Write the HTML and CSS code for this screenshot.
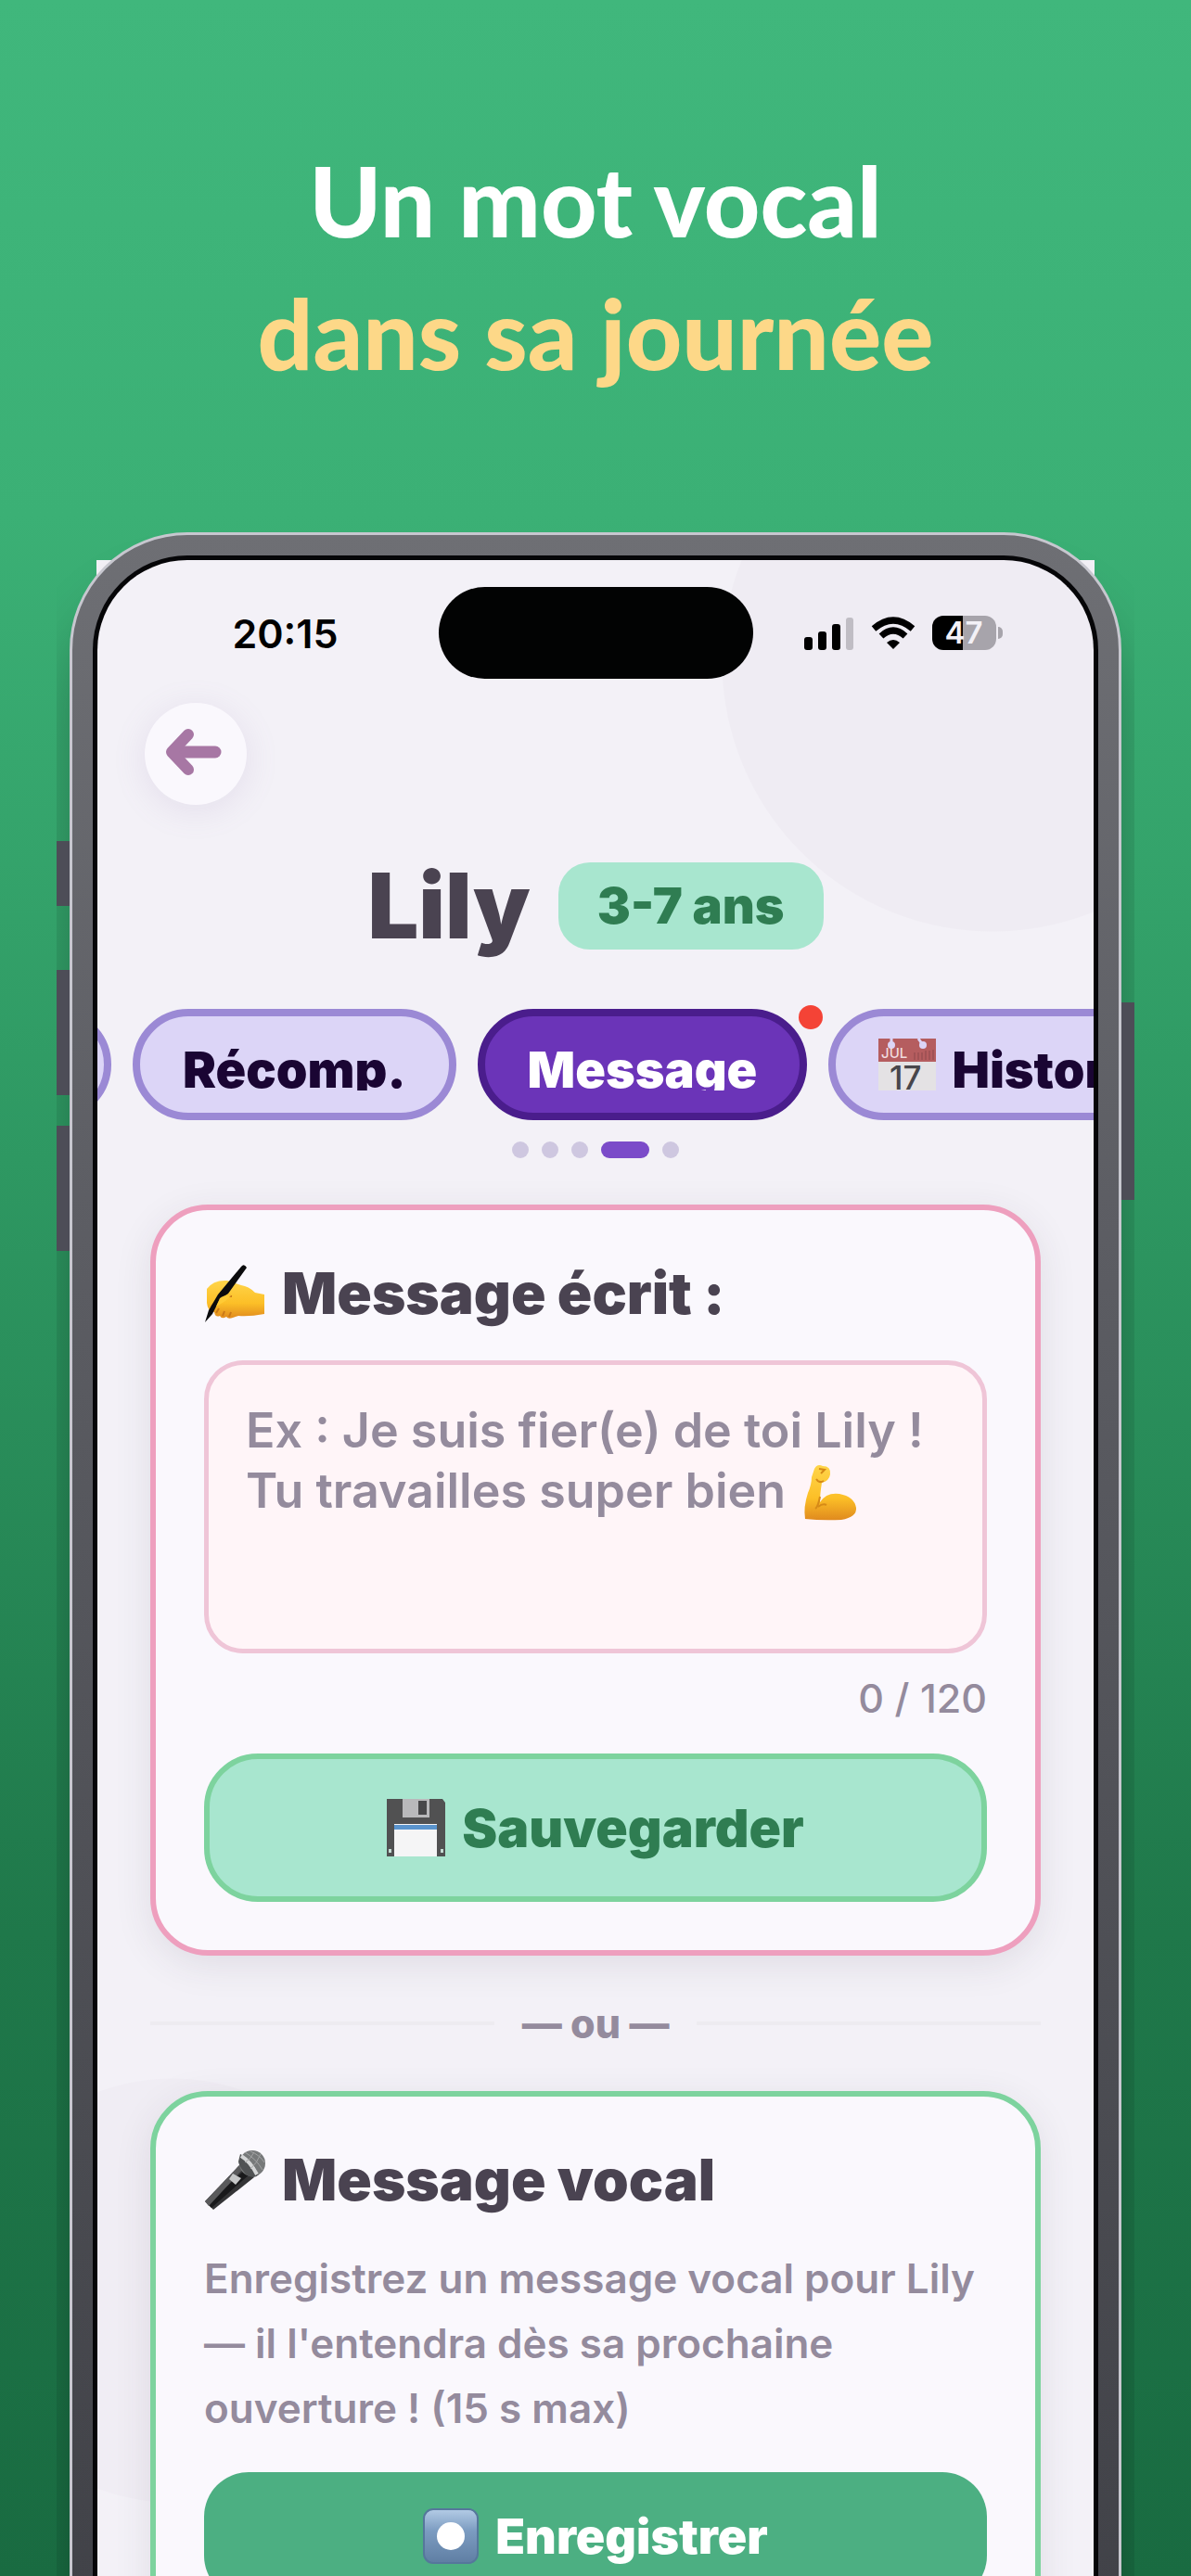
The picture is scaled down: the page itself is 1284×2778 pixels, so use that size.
FILE: index.html
```html
<!DOCTYPE html>
<html lang="fr">
<head>
  <meta charset="UTF-8">
  <title>Un mot vocal dans sa journée</title>
  <meta name="viewport" content="width=device-width, initial-scale=1.0">
  <link rel="stylesheet" href="styles.css">
</head>
<body>

  <!-- HEADLINE -->
  <header class="headline">
    <p>Un mot vocal</p>
    <p class="accent">dans sa journée</p>
  </header>

  <!-- PHONE -->
  <div class="phone">
    <span class="side-button mute"></span>
    <span class="side-button volume-up"></span>
    <span class="side-button volume-down"></span>
    <span class="side-button power"></span>

    <div class="frame">
      <main class="screen">

        <!-- Status bar -->
        <div class="status-bar">
          <span class="time">20:15</span>
          <span class="island"></span>
          <div class="status-icons">
            <svg width="54" height="36" viewBox="0 0 54 36">
              <rect x="0" y="22" width="9" height="14" rx="3"/>
              <rect x="15" y="16" width="9" height="20" rx="3"/>
              <rect x="30" y="8" width="9" height="28" rx="3"/>
              <rect x="45" y="1" width="8" height="35" rx="3" fill="#c0bdc4"/>
            </svg>
            <svg width="48" height="36" viewBox="0 0 48 36">
              <path d="M3 13 Q24 -5 45 13" fill="none" stroke="#000" stroke-width="7"/>
              <path d="M11 21 Q24 9 37 21" fill="none" stroke="#000" stroke-width="7"/>
              <path d="M17 28 Q24 22 31 28 L24 35 Z"/>
            </svg>
            <div class="battery">47</div>
          </div>
        </div>

        <button class="back-btn" aria-label="Retour">
          <svg width="62" height="52" viewBox="0 0 62 52">
            <path d="M54 26 H10" stroke="#a777a4" stroke-width="13" stroke-linecap="round"/>
            <path d="M25 7 L7 26 L25 45" fill="none" stroke="#a777a4" stroke-width="12" stroke-linecap="round" stroke-linejoin="round"/>
          </svg>
        </button>

        <div class="profile">
          <h1>Lily</h1>
          <span class="age">3-7 ans</span>
        </div>

        <!-- Tabs -->
        <nav class="tabs">
          <button class="tab tab-previous" aria-label="Onglet précédent"></button>
          <button class="tab"><span>Récomp.</span></button>
          <button class="tab active"><span>Message</span><i class="notif"></i></button>
          <button class="tab">
            <span>
              <svg class="emoji" width="62" height="56" viewBox="0 0 62 56">
                <rect y="2" width="62" height="54" fill="#e4e2e4"/>
                <path d="M0 0 H62 V25 H0 Z" fill="#b55d5f"/>
                <path d="M14 0 V6 M43 0 L48 7" stroke="#dcd5f7" stroke-width="3"/>
                <circle cx="14" cy="7" r="4" fill="#dcd5f7"/>
                <circle cx="48" cy="7" r="4" fill="#dcd5f7"/>
                <path d="M39 15 V23 M43 15 V23 M47 15 V23 M51 13 V23 M55 13 V23 M59 12 V23" stroke="#8d494d" stroke-width="1"/>
                <text x="3" y="21" font-size="15" font-weight="500" fill="#f0dcdf">JUL</text>
                <text x="12" y="55" font-size="35" font-weight="500" fill="#48464b">17</text>
              </svg>
              Historique
            </span>
          </button>
        </nav>

        <div class="dots">
          <span></span><span></span><span></span><span class="current"></span><span></span>
        </div>

        <!-- Written message -->
        <section class="card card-pink">
          <h2>
            <svg class="emoji" width="66" height="64" viewBox="0 0 66 64">
              <defs>
                <linearGradient id="skin" x1="0" y1="0" x2="0" y2="1">
                  <stop offset="0" stop-color="#ffd54a"/>
                  <stop offset=".6" stop-color="#fcbf27"/>
                  <stop offset="1" stop-color="#e08a1e"/>
                </linearGradient>
              </defs>
              <path d="M3 27 Q10 17 25 18 L40 23 Q48 24 55 31 L65 33 V54 Q49 57 37 56 L31 58 Q26 60 24 57 Q19 60 17 56 Q12 58 11 52 Q4 52 3 42 Z" fill="url(#skin)"/>
              <path d="M8 46 Q17 33 30 35 M13 53 L16 48 M20 56 L22 51 M27 57 L29 52" fill="none" stroke="#c97818" stroke-width="2"/>
              <path d="M40 3 Q43 -1 46 4 L26 32 L17 38 L9 54 L1 63 L5 50 L15 33 Z" fill="#0b0b0d"/>
              <path d="M17 37 Q24 32 29 34 L23 40 L13 46 Z" fill="#ffcb35"/>
            </svg>
            <label for="message">Message écrit :</label>
          </h2>
          <div class="message-box">
            <textarea id="message" maxlength="120" placeholder="Ex : Je suis fier(e) de toi Lily !&#10;Tu travailles super bien"></textarea>
            <svg class="muscle" width="58" height="62" viewBox="0 0 58 62">
              <path d="M12 6 Q15 0 21 3 Q30 3 29 12 Q28 19 20 21 Q18 33 18 42 Q25 31 39 33 Q55 36 57 48 Q58 58 41 61 Q20 62 2 60 Q0 47 5 32 Q9 23 9 15 Z" fill="url(#skin)"/>
              <path d="M14 17 Q17 22 22 19 M17 6 L23 7 L19 11 M18 36 Q16 47 13 49 M16 47 Q21 43 25 45" fill="none" stroke="#d68a17" stroke-width="2"/>
            </svg>
          </div>
          <p class="counter">0 / 120</p>
          <button class="btn btn-save">
            <svg class="emoji" width="63" height="62" viewBox="0 0 63 62">
              <path d="M3 0 H60 L63 4 V62 H0 V0 Z" fill="#515152"/>
              <path d="M17 0 H46 V20 H17 Z" fill="#b9b9bb"/>
              <rect x="34" y="2" width="9" height="15" fill="#48484a"/>
              <path d="M8 62 V27 H54 V62 Z" fill="#f5f5f6"/>
              <rect x="8" y="28" width="46" height="5" fill="#5a94cd"/>
              <rect x="2" y="54" width="3" height="4" fill="#c5dbd3"/>
              <rect x="58" y="54" width="3" height="4" fill="#c5dbd3"/>
            </svg>
            Sauvegarder
          </button>
        </section>

        <div class="divider"><span>— ou —</span></div>

        <!-- Voice message -->
        <section class="card card-green">
          <h2>
            <svg class="emoji" width="66" height="64" viewBox="0 0 66 64">
              <path d="M1 55 L39 15 L54 29 L10 64 Z" fill="#343436"/>
              <path d="M4 58 L45 20 L50 25 L8 62 Z" fill="#19191b"/>
              <path d="M1 55 L39 15 L43 19 L5 60 Z" fill="#5a5a5c"/>
              <ellipse cx="52" cy="14" rx="14" ry="14" fill="#77797a"/>
              <path d="M39 4 Q52 9 59 26 Q54 32 45 26 Q37 16 37 12 Z" fill="#505254"/>
              <path d="M40 6 Q50 12 57 26" fill="none" stroke="#d5d6d7" stroke-width="4"/>
              <path d="M44 2 Q56 9 63 21 M50 1 Q60 5 65 13 M61 4 Q57 14 50 20 M54 2 Q50 10 44 13" fill="none" stroke="#a2a3a4" stroke-width="1"/>
              <path d="M31 25 L40 30 L34 37 L27 31 Z" fill="#c6c7c8"/>
            </svg>
            Message vocal
          </h2>
          <p class="help">Enregistrez un message vocal pour Lily — il l'entendra dès sa prochaine ouverture ! (15 s max)</p>
          <button class="btn btn-record">
            <svg class="emoji" width="60" height="60" viewBox="0 0 60 60">
              <defs>
                <linearGradient id="key" x1="0" y1="0" x2="0" y2="1">
                  <stop offset="0" stop-color="#b4cce6"/>
                  <stop offset=".4" stop-color="#7c9cc1"/>
                  <stop offset="1" stop-color="#5f7ea3"/>
                </linearGradient>
              </defs>
              <rect x="1" y="1" width="58" height="58" rx="10" fill="url(#key)" stroke="#55779b" stroke-width="2"/>
              <circle cx="30" cy="30" r="15" fill="#fff"/>
            </svg>
            Enregistrer
          </button>
        </section>

      </main>
    </div>
  </div>

</body>
</html>
```
FILE: styles.css
```css
* {
  box-sizing: border-box;
}

body {
  margin: 0;
  height: 100vh;
  overflow: hidden;
  display: flex;
  flex-direction: column;
  font-family: Inter, "Liberation Sans", sans-serif;
  background: linear-gradient(#40b77c 0%, #3bb075 20%, #2e9862 45%, #1f784a 75%, #196b41 100%);
}

button,
textarea {
  font-family: inherit;
  margin: 0;
}

h1,
h2,
p {
  margin: 0;
}

/* --- HEADLINE --- */
.headline {
  padding: 144px 40px;
  text-align: center;
  font-family: Lato, sans-serif;
  font-size: 105px;
  font-weight: 900;
  line-height: 143px;
  color: #fff;
}

.headline .accent {
  color: #fdd888;
}

/* --- PHONE --- */
.phone {
  position: relative;
  flex: 1;
  min-height: 0;
  margin: 0 61px;
  padding: 0 14px;
  overflow: hidden;
}

.phone::before {
  content: "";
  position: absolute;
  inset: 30px 43px 0;
  background: #f3f1f7;
}

.frame {
  position: relative;
  padding: 22px 22px 0;
  border: 3px solid #c7c7cf;
  border-radius: 127px 127px 0 0;
  background: linear-gradient(#6e6f74 0%, #5c5d63 33%, #404147 100%);
  box-shadow: 0 60px 60px rgba(0, 0, 0, 0.26);
}

.side-button {
  position: absolute;
  left: 0;
  width: 14px;
  z-index: 1;
  background: #4d4d57;
}

.mute {
  top: 333px;
  height: 70px;
}

.volume-up {
  top: 472px;
  height: 135px;
}

.volume-down {
  top: 640px;
  height: 135px;
}

.power {
  top: 507px;
  left: auto;
  right: 0;
  height: 213px;
}

.screen {
  position: relative;
  overflow: hidden;
  padding-top: 29px;
  border: 5px solid #060608;
  border-bottom: 0;
  border-radius: 102px 102px 0 0;
  background:
    radial-gradient(circle at 965px 109px, #efecf3 291px, transparent 292px),
    radial-gradient(circle at 81px 1866px, #f0edf4 228px, transparent 229px),
    #f3f1f7;
}

/* --- STATUS BAR --- */
.status-bar {
  display: grid;
  grid-template-columns: 1fr 339px 1fr;
  align-items: center;
}

.time {
  justify-self: end;
  margin-right: 108px;
  font-size: 43px;
  font-weight: 600;
}

.island {
  height: 99px;
  border-radius: 50px;
  background: #020303;
}

.status-icons {
  display: flex;
  align-items: center;
  gap: 18px;
  margin-left: 55px;
}

.battery {
  position: relative;
  width: 69px;
  height: 37px;
  border-radius: 12px;
  background: linear-gradient(90deg, #000 48%, #a7a4ab 48%);
  color: #f3f1f7;
  font-size: 33px;
  font-weight: 600;
  line-height: 37px;
  text-align: center;
}

.battery::after {
  content: "";
  position: absolute;
  right: -7px;
  top: 12px;
  width: 5px;
  height: 13px;
  border-radius: 0 5px 5px 0;
  background: #a7a4ab;
}

/* --- PROFILE --- */
.back-btn {
  display: flex;
  align-items: center;
  justify-content: center;
  width: 110px;
  height: 110px;
  margin: 26px 0 0 51px;
  padding: 0 4px 4px 0;
  border: none;
  border-radius: 50%;
  background: #faf8fd;
  box-shadow: 0 6px 36px rgba(140, 110, 170, 0.14);
}

.profile {
  display: flex;
  align-items: center;
  justify-content: center;
  gap: 30px;
  margin-top: 59px;
}

.profile h1 {
  font-size: 97px;
  font-weight: 900;
  line-height: 100px;
  color: #4a4351;
}

.age {
  padding: 0 42px;
  border-radius: 34px;
  background: #a8e6cf;
  color: #2f7d52;
  font-size: 54px;
  font-weight: 900;
  line-height: 94px;
}

/* --- TABS --- */
.tabs {
  display: flex;
  gap: 23px;
  margin-top: 61px;
}

.tab {
  position: relative;
  flex-shrink: 0;
  height: 120px;
  padding: 0 46px;
  border: 8px solid #9b89d5;
  border-radius: 60px;
  background: #dcd5f7;
  color: #1a0533;
  font-size: 54px;
  font-weight: 900;
  line-height: 56px;
  white-space: nowrap;
}

.tab span {
  display: flex;
  align-items: center;
  gap: 17px;
  height: 56px;
  padding-top: 12px;
  overflow: hidden;
}

.tab .emoji {
  margin-bottom: 12px;
}

.tab-previous {
  width: 180px;
  margin-left: -165px;
}

.tab.active {
  border-color: #4a1d8c;
  background: #6b34b8;
  color: #fff;
}

.notif {
  position: absolute;
  top: -12px;
  right: -25px;
  width: 26px;
  height: 26px;
  border-radius: 50%;
  background: #f44336;
}

.dots {
  display: flex;
  justify-content: center;
  gap: 14px;
  margin-top: 23px;
}

.dots span {
  width: 18px;
  height: 18px;
  border-radius: 9px;
  background: #cec7e0;
}

.dots .current {
  width: 52px;
  background: #7b4bc9;
}

/* --- CARDS --- */
.card {
  margin: 50px 57px 0;
  padding: 52px;
  border: 6px solid #ee9fbe;
  border-radius: 62px;
  background: #faf8fd;
  box-shadow: 0 10px 40px rgba(60, 50, 70, 0.1);
}

.card-green {
  margin-top: 0;
  border-color: #7dd39e;
}

.card h2 {
  display: flex;
  align-items: center;
  gap: 18px;
  color: #4a4351;
  font-size: 62px;
  font-weight: 900;
  line-height: 76px;
}

.emoji {
  flex-shrink: 0;
}

.message-box {
  position: relative;
  margin-top: 34px;
}

.message-box textarea {
  display: block;
  width: 100%;
  height: 316px;
  padding: 38px 40px;
  border: 5px solid #efc5d7;
  border-radius: 42px;
  background: #fff5f8;
  color: #4a4351;
  font-size: 52px;
  font-weight: 600;
  line-height: 65px;
  resize: none;
}

.message-box textarea::placeholder {
  color: #948b9d;
  opacity: 1;
}

.muscle {
  position: absolute;
  top: 111px;
  left: 646px;
}

.counter {
  margin-top: 22px;
  color: #948b9d;
  font-size: 43px;
  font-weight: 500;
  line-height: 52px;
  text-align: right;
}

.btn {
  display: flex;
  align-items: center;
  justify-content: center;
  gap: 18px;
  width: 100%;
  margin-top: 34px;
  border: none;
  font-weight: 900;
}

.btn-save {
  height: 160px;
  border: 6px solid #7dd39e;
  border-radius: 58px;
  background: #a8e6cf;
  color: #2f7d52;
  font-size: 57px;
}

.btn-record {
  height: 138px;
  border-radius: 48px;
  background: #4caf82;
  color: #fff;
  font-size: 52px;
}

.help {
  margin-top: 33px;
  color: #948b9d;
  font-size: 44px;
  font-weight: 600;
  line-height: 70px;
}

/* --- DIVIDER --- */
.divider {
  display: flex;
  align-items: center;
  gap: 30px;
  margin: 47px 57px;
  color: #948b9d;
  font-size: 43px;
  font-weight: 800;
  line-height: 52px;
}

.divider::before,
.divider::after {
  content: "";
  flex: 1;
  height: 4px;
  background: #edebf0;
}
```
